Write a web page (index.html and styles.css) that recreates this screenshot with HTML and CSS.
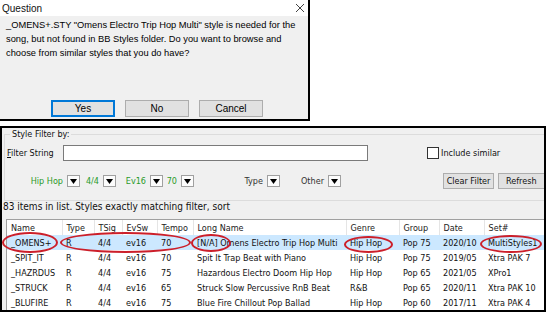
FILE: index.html
```html
<!DOCTYPE html>
<html lang="en">
  <head>
    <meta charset="UTF-8" />
    <meta name="viewport" content="width=device-width, initial-scale=1.0" />
    <title>Style not found</title>
    <link rel="stylesheet" href="styles.css">
  </head>
  <body>
    <div class="dialog">
      <div class="titlebar">
        <span>Question</span>
        <svg class="close" width="10" height="10" viewBox="0 0 10 10"><path d="M1 1L9 9M9 1L1 9" stroke="#444" stroke-width="1" fill="none"/></svg>
      </div>
      <div class="dlg-body">
        <p class="msg">_OMENS+.STY "Omens Electro Trip Hop Multi" style is needed for the<br>song, but not found in BB Styles folder. Do you want to browse and<br>choose from similar styles that you do have?</p>
        <div class="dlg-buttons">
          <button class="btn default">Yes</button>
          <button class="btn">No</button>
          <button class="btn">Cancel</button>
        </div>
      </div>
    </div>

    <div class="panel">
      <fieldset class="filter">
        <legend>Style Filter by:</legend>
        <div class="filter-row">
          <label class="lbl"><u>F</u>ilter String</label>
          <input type="text" class="filter-input" />
          <label class="similar"><span class="check"></span>Include similar</label>
        </div>
        <div class="pick-row">
          <span class="pick green">Hip Hop</span><span class="drop"><svg width="7" height="5" viewBox="0 0 7 5"><path d="M0 0H7L3.5 5Z"/></svg></span>
          <span class="pick green">4/4</span><span class="drop"><svg width="7" height="5" viewBox="0 0 7 5"><path d="M0 0H7L3.5 5Z"/></svg></span>
          <span class="pick green">Ev16</span><span class="drop"><svg width="7" height="5" viewBox="0 0 7 5"><path d="M0 0H7L3.5 5Z"/></svg></span>
          <span class="pick green">70</span><span class="drop"><svg width="7" height="5" viewBox="0 0 7 5"><path d="M0 0H7L3.5 5Z"/></svg></span>
          <span class="pick">Type</span><span class="drop"><svg width="7" height="5" viewBox="0 0 7 5"><path d="M0 0H7L3.5 5Z"/></svg></span>
          <span class="pick">Other</span><span class="drop"><svg width="7" height="5" viewBox="0 0 7 5"><path d="M0 0H7L3.5 5Z"/></svg></span>
          <span></span>
          <button class="btn2">Clear Filter</button>
          <button class="btn2 refresh">Refresh</button>
        </div>
      </fieldset>

      <div class="count">83 items in list. Styles exactly matching filter, sort</div>

      <div class="list">
        <table>
          <colgroup>
            <col style="width:55px"><col style="width:32px"><col style="width:28px"><col style="width:35px"><col style="width:36px">
            <col style="width:153px"><col style="width:53px"><col style="width:40px"><col style="width:45px"><col style="width:80px">
          </colgroup>
          <thead>
            <tr><th>Name</th><th>Type</th><th>TSig</th><th>EvSw</th><th>Tempo</th><th>Long Name</th><th>Genre</th><th>Group</th><th>Date</th><th>Set#</th></tr>
          </thead>
          <tbody>
            <tr class="selected"><td>_OMENS+</td><td>R</td><td>4/4</td><td>ev16</td><td>70</td><td>[N/A] Omens Electro Trip Hop Multi</td><td>Hip Hop</td><td>Pop 75</td><td>2020/10</td><td>MultiStyles1</td></tr>
            <tr><td>_SPIT_IT</td><td>R</td><td>4/4</td><td>ev16</td><td>70</td><td>Spit It Trap Beat with Piano</td><td>Hip Hop</td><td>Pop 75</td><td>2019/05</td><td>Xtra PAK 7</td></tr>
            <tr><td>_HAZRDUS</td><td>R</td><td>4/4</td><td>ev16</td><td>75</td><td>Hazardous Electro Doom Hip Hop</td><td>Hip Hop</td><td>Pop 65</td><td>2021/05</td><td>XPro1</td></tr>
            <tr><td>_STRUCK</td><td>R</td><td>4/4</td><td>ev16</td><td>65</td><td>Struck Slow Percussive RnB Beat</td><td>R&amp;B</td><td>Pop 65</td><td>2020/11</td><td>Xtra PAK 10</td></tr>
            <tr><td>_BLUFIRE</td><td>R</td><td>4/4</td><td>ev16</td><td>75</td><td>Blue Fire Chillout Pop Ballad</td><td>Hip Hop</td><td>Pop 60</td><td>2017/11</td><td>Xtra PAK 4</td></tr>
            <tr><td>_CAMILE</td><td>R</td><td>4/4</td><td>ev16</td><td>60</td><td>Camille Slow Romantic Chord Pop</td><td>Hip Hop</td><td>Pop 60</td><td>2017/11</td><td>Xtra PAK 4</td></tr>
          </tbody>
        </table>
        <!-- red marks drawn over the selected row -->
        <div class="ring r1"></div>
        <div class="ring r2"></div>
        <div class="ring r3"></div>
        <div class="ring r4"></div>
        <div class="ring r5"></div>
      </div>
    </div>
  </body>
</html>
```

FILE: styles.css
```css
body {
  margin: 0;
  background: #fff;
  font-family: "Liberation Sans", Arial, sans-serif;
  width: 551px;
  height: 314px;
  overflow: hidden;
}

/* question dialog */
.dialog {
  width: 308px;
  height: 119px;
  border-right: 2px solid #000;
  border-bottom: 2px solid #000;
  background: #f0f0f0;
  display: flex;
  flex-direction: column;
}
.titlebar {
  height: 16px;
  background: #fff;
  display: flex;
  justify-content: space-between;
  align-items: center;
  padding: 0 3px 0 2px;
  font-size: 10px;
  color: #111;
}
.dlg-body {
  flex: 1;
  display: flex;
  flex-direction: column;
}
.msg {
  margin: 2px 0 0 6px;
  font-size: 9.3px;
  line-height: 14px;
  white-space: nowrap;
  color: #000;
}
.dlg-buttons {
  display: flex;
  gap: 10px;
  margin: auto 0 2px 51px;
}
.btn {
  width: 64px;
  height: 17px;
  padding: 0;
  background: #e1e1e1;
  border: 1px solid #adadad;
  font: 10px "Liberation Sans", Arial, sans-serif;
  color: #000;
}
.btn.default {
  border: 2px solid #0078d7;
}

/* style picker */
.panel {
  margin-top: 5px;
  width: 542px;
  height: 182px;
  border: 2px solid #000;
  background: #f0f0f0;
  overflow: hidden;
  font-family: "DejaVu Sans Condensed", "DejaVu Sans", sans-serif;
  font-size: 9px;
  color: #111;
}
.filter {
  margin: 0 -40px 0 2px;
  padding: 5px 0 11px 2px;
  border: 1px solid #dcdcdc;
}
.filter legend {
  padding: 0 2px;
  margin-left: 3px;
  line-height: 12px;
}
.filter-row {
  display: flex;
  align-items: center;
  height: 16px;
}
.lbl {
  width: 56px;
}
.filter-input {
  width: 305px;
  height: 16px;
  box-sizing: border-box;
  border: 1px solid #7a7a7a;
  background: #fff;
  margin: 0;
}
.similar {
  display: flex;
  align-items: center;
  margin-left: 59px;
}
.check {
  width: 12px;
  height: 12px;
  box-sizing: border-box;
  border: 1px solid #333;
  background: #fff;
  margin-right: 2px;
}
.pick-row {
  margin-top: 12px;
  display: grid;
  grid-template-columns: 60px 13px 23px 13px 34px 13px 18px 13px 73px 13px 48px 13px 102px 51px 64px;
  align-items: center;
  height: 16px;
}
.pick {
  text-align: right;
  padding-right: 4px;
  color: #333;
}
.pick.green {
  color: #2a9a2a;
}
.drop {
  width: 13px;
  height: 12px;
  box-sizing: border-box;
  border: 1px solid #a0a0a0;
  background: #fcfcfc;
  display: grid;
  place-items: center;
}
.btn2 {
  height: 16px;
  padding: 0;
  background: #e1e1e1;
  border: 1px solid #adadad;
  font: inherit;
  color: #111;
}
.btn2.refresh {
  margin-left: 4px;
  text-align: left;
  padding-left: 7px;
}
.count {
  font-size: 10px;
  line-height: 12px;
  padding-left: 1px;
}
.list {
  position: relative;
  margin: 6px 0 0 4px;
  border: 1px solid #a0a0a0;
  border-right: none;
  background: #fff;
  height: 200px;
}
table {
  border-collapse: collapse;
  table-layout: fixed;
  width: 557px;
}
th, td {
  padding: 0 0 0 4px;
  height: 15px;
  text-align: left;
  font-weight: normal;
  white-space: nowrap;
  overflow: hidden;
}
th {
  color: #222;
  border-right: 1px solid #e5e5e5;
}
.selected td {
  background: #cce8ff;
}
.ring {
  position: absolute;
  box-sizing: border-box;
  border: 2px solid #cc1f2a;
  border-radius: 50%;
}
.r1 { left: -5px; top: 12px; width: 56px; height: 21px; }
.r2 { left: 53px; top: 12px; width: 131px; height: 21px; }
.r3 { left: 184px; top: 14px; width: 40px; height: 18px; }
.r4 { left: 337px; top: 16px; width: 49px; height: 17px; }
.r5 { left: 473px; top: 15px; width: 62px; height: 18px; }
```
